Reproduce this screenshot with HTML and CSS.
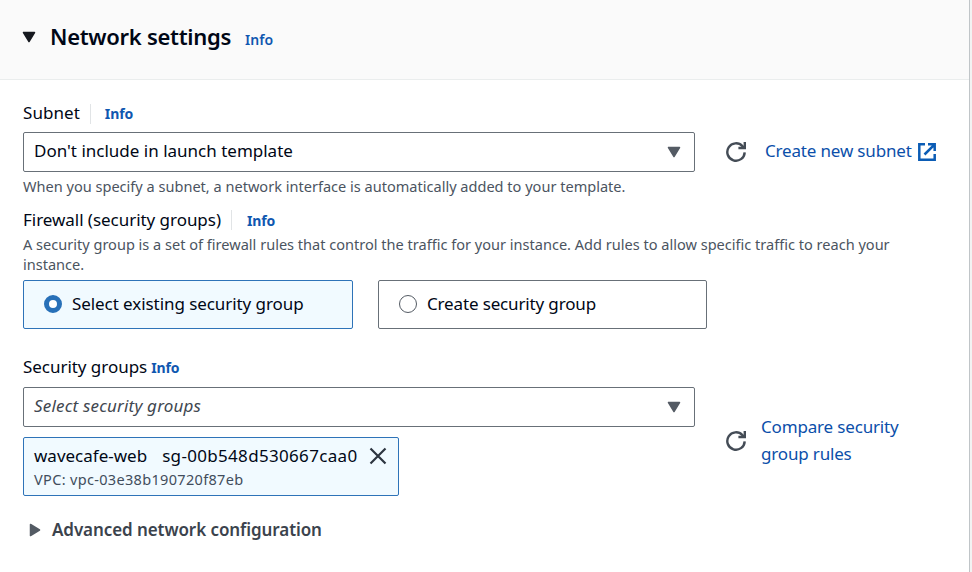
FILE: index.html
```
<!DOCTYPE html>
<html lang="en">
<head>
<meta charset="utf-8">
<title>Network settings</title>
<link rel="stylesheet" href="styles.css">
</head>
<body>
<svg class="defs" width="0" height="0" aria-hidden="true">
  <symbol id="refresh" viewBox="0 0 20 20"><path d="M18.7 10.4A8.7 8.7 0 1 1 16.4 4.1L18 6" fill="none" stroke="currentColor" stroke-width="2.4"/><path d="M18.8 0V6H12.4" fill="none" stroke="currentColor" stroke-width="2.4"/></symbol>
  <symbol id="caret" viewBox="0 0 14 12"><path d="M1.5 1.5H12.5L7 10.5Z" fill="currentColor" stroke="currentColor" stroke-width="1.5" stroke-linejoin="round"/></symbol>
</svg>
<main class="panel">
  <header class="header">
    <svg class="caret dark"><use href="#caret"/></svg>
    <h2 class="title">Network settings</h2>
    <a class="info thin">Info</a>
  </header>
  <div class="body">
    <div class="label subnet"><span>Subnet</span><i class="divider"></i><a class="info">Info</a></div>
    <div class="row">
      <div class="select"><span>Don't include in launch template</span><svg class="caret"><use href="#caret"/></svg></div>
      <svg class="refresh"><use href="#refresh"/></svg>
      <a class="link create"><span>Create new subnet</span>
        <svg class="external" viewBox="0 0 18 18"><path d="M7 1.3H1.3V16.7H16.7V11M10 1.3H16.7V8M16.2 1.8L6.5 11.5" fill="none" stroke="currentColor" stroke-width="2.5"/></svg></a>
    </div>
    <p class="help">When you specify a subnet, a network interface is automatically added to your template.</p>
    <div class="label firewall"><span>Firewall (security groups)</span><i class="divider"></i><a class="info">Info</a></div>
    <p class="help">A security group is a set of firewall rules that control the traffic for your instance. Add rules to allow specific traffic to reach your<br>instance.</p>
    <div class="tiles">
      <div class="tile selected"><i class="radio"></i><span>Select existing security group</span></div>
      <div class="tile create-tile"><i class="radio"></i><span>Create security group</span></div>
    </div>
    <div class="label groups"><span>Security groups</span><a class="info">Info</a></div>
    <div class="row">
      <div class="picker">
        <div class="select placeholder"><span>Select security groups</span><svg class="caret"><use href="#caret"/></svg></div>
        <div class="token">
          <div class="token-main"><span>wavecafe-web</span><span class="group-id">sg-00b548d530667caa0</span>
            <svg class="close" viewBox="0 0 18 18"><path d="M1.5 1.5L16.5 16.5M16.5 1.5L1.5 16.5" fill="none" stroke="currentColor" stroke-width="2.2"/></svg></div>
          <div class="token-sub">VPC: vpc-03e38b190720f87eb</div>
        </div>
      </div>
      <svg class="refresh lower"><use href="#refresh"/></svg>
      <a class="link compare">Compare security<br>group rules</a>
    </div>
    <div class="advanced"><svg class="caret side"><use href="#caret"/></svg><span>Advanced network configuration</span></div>
  </div>
</main>
</body>
</html>
```
FILE: styles.css
```
* { box-sizing: border-box; }
body { margin: 0; height: 572px; overflow: hidden; background: #f2f3f3; font: 17px/24px "Noto Sans", "Open Sans", sans-serif; color: #000716; white-space: nowrap; }
.defs { position: absolute; }
.panel { width: 970px; height: 572px; background: #fff; border-right: 1px solid #c0c5c8; }
.header { display: flex; align-items: center; height: 80px; padding: 0 0 5px 22px; background: #fafafa; border-bottom: 1px solid #eaeded; }
.caret { width: 14px; height: 12px; color: #545b64; flex: none; }
.dark { color: #16191f; }
.title { margin: 0 0 2px 14px; width: 181px; font-size: 22px; font-weight: 600; line-height: 30px; letter-spacing: -0.3px; }
.info { color: #0f57b0; font-size: 14px; font-weight: 700; line-height: 20px; margin-top: 2px; letter-spacing: -0.1px; }
.info.thin { font-weight: 600; margin: 6px 0 0 14px; letter-spacing: 0.1px; }
.body { padding: 23px 0 0 23px; }
.label { display: flex; align-items: center; height: 21px; }
.label span { letter-spacing: -0.04px; }
.subnet span { letter-spacing: 0.05px; }
.subnet span, .subnet .info { margin-bottom: 2px; }
.subnet .info { margin: 1px 0 1px -1px; }
.divider { width: 1px; height: 20px; margin: 1px 15px 0 10px; background: #e1e4e6; }
.row { display: flex; align-items: center; margin-top: 8px; }
.select { display: flex; align-items: center; justify-content: space-between; width: 672px; height: 40px; padding: 0 13px 2px 10px; border: 1px solid #687078; border-radius: 2px; background: #fff; }
.select .caret { margin-top: 2px; }
.placeholder { color: #414750; font-style: italic; letter-spacing: 0.18px; }
.refresh { width: 20px; height: 20px; margin-left: 31px; color: #444c56; flex: none; }
.lower { margin-bottom: 1px; }
.link { color: #0b4faa; letter-spacing: -0.17px; }
.create { display: flex; align-items: center; gap: 6px; margin-left: 19px; }
.create span { margin-bottom: 2px; }
.external { width: 18px; height: 18px; color: #0b5cb5; }
.help { margin: 4px 0 0; font-size: 14.56px; line-height: 20px; color: #4b545f; }
.firewall { margin-top: 13px; }
.tiles { display: flex; gap: 25px; margin-top: 6px; }
.tile { display: flex; align-items: center; gap: 10px; width: 329px; height: 49px; padding: 0 0 1px 20px; border: 1px solid #687078; border-radius: 2px; letter-spacing: -0.07px; }
.tile span { margin-bottom: 1px; }
.create-tile { letter-spacing: -0.15px; }
.selected { width: 330px; border-color: #2e73b8; background: #f1faff; }
.radio { width: 18px; height: 18px; border: 1px solid #545b64; border-radius: 50%; background: #fff; }
.selected .radio { border: 5px solid #2870b8; }
.groups { gap: 4px; margin-top: 27px; }
.groups + .row { margin-top: 10px; }
.token { width: 376px; height: 59px; margin-top: 10px; padding: 7px 11px 0 10px; border: 1px solid #2e73b8; border-radius: 2px; background: #f1faff; }
.token-main { display: flex; align-items: center; height: 23px; }
.token-main span { margin-bottom: 1px; }
.token-sub { font-size: 14.5px; line-height: 22px; letter-spacing: 0.33px; color: #414d5c; }
.group-id { margin-left: 15px; letter-spacing: 0.32px; }
.close { width: 18px; height: 18px; margin: 0 0 1px auto; color: #2d3540; }
.compare { margin: 0 0 4px 15px; line-height: 27px; }
.advanced { display: flex; align-items: center; gap: 10px; height: 24px; margin: 22px 0 0 5px; font-weight: 600; letter-spacing: -0.08px; color: #3b434d; }
.side { transform: rotate(-90deg); }
```
